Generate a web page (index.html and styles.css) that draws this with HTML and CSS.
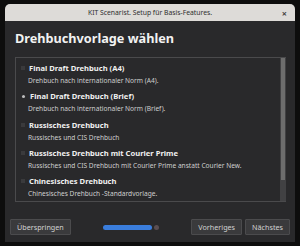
FILE: index.html
```html
<!DOCTYPE html>
<html lang="de">
<head>
  <meta charset="UTF-8" />
  <title>KIT Scenarist</title>
  <link rel="stylesheet" href="styles.css">
</head>
<body>
  <div class="fenster">
    <div class="titelleiste">
      <span>KIT Scenarist. Setup für Basis-Features.</span>
      <span class="schliessen">×</span>
    </div>
    <div class="inhalt">
      <h2>Drehbuchvorlage wählen</h2>
      <div class="liste">
        <div class="eintraege">
          <div class="eintrag">
            <div class="titel"><span class="punkt"></span>Final Draft Drehbuch (A4)</div>
            <div class="beschreibung">Drehbuch nach internationaler Norm (A4).</div>
          </div>
          <div class="eintrag">
            <div class="titel"><span class="punkt aktiv"></span>Final Draft Drehbuch (Brief)</div>
            <div class="beschreibung">Drehbuch nach internationaler Norm (Brief).</div>
          </div>
          <div class="eintrag">
            <div class="titel"><span class="punkt"></span>Russisches Drehbuch</div>
            <div class="beschreibung">Russisches und CIS Drehbuch</div>
          </div>
          <div class="eintrag">
            <div class="titel"><span class="punkt"></span>Russisches Drehbuch mit Courier Prime</div>
            <div class="beschreibung">Russisches und CIS Drehbuch mit Courier Prime anstatt Courier New.</div>
          </div>
          <div class="eintrag">
            <div class="titel"><span class="punkt"></span>Chinesisches Drehbuch</div>
            <div class="beschreibung">Chinesisches Drehbuch -Standardvorlage.</div>
          </div>
        </div>
        <div class="scrollbar"><div class="thumb"></div></div>
      </div>
      <div class="fuss">
        <button class="knopf">Überspringen</button>
        <div class="fortschritt">
          <div class="balken"></div>
          <div class="kreis"></div>
        </div>
        <div class="rechts">
          <button class="knopf">Vorheriges</button>
          <button class="knopf">Nächstes</button>
        </div>
      </div>
    </div>
  </div>
</body>
</html>
```

FILE: styles.css
```css
html, body {
  margin: 0;
  padding: 0;
  height: 100%;
  background-color: #0d0d0d;
  font-family: "Noto Sans", "Open Sans", sans-serif;
}

.fenster {
  margin: 4px 5px 0 5px;
  height: 238px;
  display: flex;
  flex-direction: column;
  background-color: #29292b;
  border-radius: 5px 5px 0 0;
  overflow: hidden;
}

.titelleiste {
  height: 17px;
  background-color: #dddbd8;
  color: #2e2e2e;
  font-size: 6.8px;
  display: flex;
  align-items: center;
  justify-content: center;
  position: relative;
}

.schliessen {
  position: absolute;
  right: 8px;
  top: 3px;
  font-size: 9px;
  font-weight: bold;
  color: #444;
}

.inhalt {
  flex: 1;
  padding: 0 5px;
  display: flex;
  flex-direction: column;
}

h2 {
  margin: 9px 0 10px 5px;
  font-size: 12.7px;
  color: #f2f2f2;
  font-weight: bold;
  line-height: 17px;
}

.liste {
  margin-left: 5px;
  margin-right: 4px;
  height: 143px;
  border: 1px solid #4a4a4c;
  border-right: none;
  display: flex;
}

.eintraege {
  flex: 1;
  padding: 4px 0 0 5px;
}

.eintrag {
  height: 28.3px;
}

.titel {
  color: #f0f0f0;
  font-size: 7.6px;
  font-weight: bold;
  line-height: 12px;
  display: flex;
  align-items: center;
}

.punkt {
  width: 4px;
  height: 4px;
  background-color: #3a3a3c;
  margin-right: 4px;
}

.punkt.aktiv {
  background-color: #bdbdbd;
  border-radius: 50%;
  width: 3px;
  height: 3px;
  margin: 0 5px 0 1px;
}

.beschreibung {
  color: #cfcfcf;
  font-size: 6.6px;
  line-height: 13px;
  padding-left: 7px;
}

.scrollbar {
  width: 6px;
  background-color: #414143;
}

.thumb {
  height: 122px;
  background-color: #6d6d6d;
  margin: 0 1px;
}

.fuss {
  margin-top: 17px;
  display: flex;
  align-items: center;
}

.knopf {
  background-color: #3a3a3c;
  border: 1px solid #4b4b4d;
  color: #d2d2d2;
  font-family: "Noto Sans", "Open Sans", sans-serif;
  font-size: 7.2px;
  height: 16px;
  padding: 0 6px;
  border-radius: 1px;
}

.fortschritt {
  display: flex;
  align-items: center;
  margin-left: 32px;
}

.balken {
  width: 49px;
  height: 5px;
  background-color: #3a7ddc;
  border-radius: 3px;
}

.kreis {
  width: 5px;
  height: 5px;
  border-radius: 50%;
  background-color: #5a4e52;
  margin-left: 2px;
}

.rechts {
  margin-left: auto;
  display: flex;
  gap: 3px;
}
```
